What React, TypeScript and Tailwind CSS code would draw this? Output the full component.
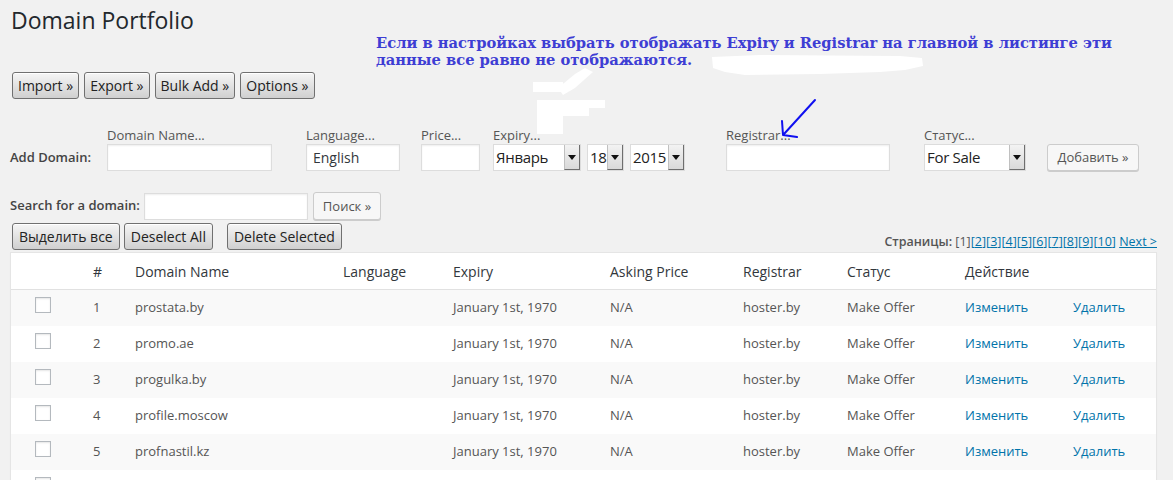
import React from "react";

const oldBase =
  "h-[27px] rounded-[3px] border border-[#707070] bg-linear-to-b from-[#f5f5f5] to-[#d0d0d0] text-[14px] leading-[25px] text-[#222] shadow-[inset_0_1px_0_#ffffff] whitespace-nowrap";
const oldBtn = `${oldBase} px-[6px]`;
const oldBtnNarrow = `${oldBase} px-[5px]`;
const wpBtn =
  "rounded-[3px] border border-[#cccccc] bg-[#f7f7f7] shadow-[0_1px_0_#cccccc] text-[13px] text-[#555] whitespace-nowrap";
const input =
  "h-[27px] bg-white border border-[#dddddd] shadow-[inset_0_1px_2px_rgba(0,0,0,0.07)]";

function Select({ w, text }: { w: string; text: string }) {
  return (
    <div className={`${w} h-[27px] bg-white border border-[#dcdcdc] flex items-stretch`}>
      <div className="flex-1 pl-[2px] text-[15px] leading-[25px] text-[#222] overflow-hidden tracking-[-0.3px]">
        {text}
      </div>
      <div className="w-[16px] bg-linear-to-b from-[#f3f3f3] to-[#d9d9d9] border-l border-[#c0c0c0] border-r border-b border-r-[#6e6e6e] border-b-[#6e6e6e] flex items-center justify-center">
        <div className="w-0 h-0 border-l-[4px] border-r-[4px] border-t-[5px] border-l-transparent border-r-transparent border-t-[#111]" />
      </div>
    </div>
  );
}

function Field({ label, className, children }: { label: string; className?: string; children: React.ReactNode }) {
  return (
    <div className={`flex flex-col ${className ?? ""}`}>
      <div className="text-[13px] leading-[18px] text-[#555] whitespace-nowrap">{label}</div>
      {children}
    </div>
  );
}

const rows = [
  ["1", "prostata.by"],
  ["2", "promo.ae"],
  ["3", "progulka.by"],
  ["4", "profile.moscow"],
  ["5", "profnastil.kz"],
];

const grid =
  "grid grid-cols-[82px_42px_208px_110px_157px_133px_104px_118px_108px_1fr]";

export default function App() {
  return (
    <div className="relative w-full h-[480px] overflow-hidden bg-[#f1f1f1] font-['Open_Sans',sans-serif] text-[#444]">
      <div className="pl-[10px] pr-[16px]">
        <h1 className="mt-[6px] text-[23px] leading-[29px] text-[#23282d] pl-[1px]">Domain Portfolio</h1>

        <div className="mt-[37px] ml-[2px] flex gap-[5px]">
          <button className={oldBtnNarrow}>Import »</button>
          <button className={oldBtnNarrow}>Export »</button>
          <button className={oldBtnNarrow}>Bulk Add »</button>
          <button className={oldBtnNarrow}>Options »</button>
        </div>

        <div className="mt-[27px] flex items-end">
          <div className="w-[97px] h-[27px] flex items-center text-[13px] font-semibold text-[#444]">Add Domain:</div>
          <Field label="Domain Name...">
            <div className={`${input} w-[165px]`} />
          </Field>
          <Field label="Language..." className="ml-[34px]">
            <div className={`${input} w-[94px] px-[6px] text-[14px] leading-[25px] text-[#32373c]`}>English</div>
          </Field>
          <Field label="Price..." className="ml-[21px]">
            <div className={`${input} w-[59px]`} />
          </Field>
          <Field label="Expiry..." className="ml-[13px]">
            <div className="flex gap-[6px]">
              <Select w="w-[88px]" text="Январь" />
              <Select w="w-[37px]" text="18" />
              <Select w="w-[55px]" text="2015" />
            </div>
          </Field>
          <Field label="Registrar..." className="ml-[41px]">
            <div className={`${input} w-[164px]`} />
          </Field>
          <Field label="Статус..." className="ml-[34px]">
            <Select w="w-[102px]" text="For Sale" />
          </Field>
          <button className={`${wpBtn} ml-[21px] w-[92px] h-[27px] leading-[25px]`}>Добавить »</button>
        </div>

        <div className="mt-[21px] flex items-center">
          <div className="w-[134px] text-[13px] font-semibold text-[#444] whitespace-nowrap">Search for a domain:</div>
          <div className={`${input} w-[164px]`} />
          <button className={`${wpBtn} ml-[5px] w-[68px] h-[28px] leading-[26px]`}>Поиск »</button>
        </div>

        <div className="mt-[3px] flex items-end">
          <div className="ml-[2px] flex">
            <button className={oldBtn}>Выделить все</button>
            <button className={`${oldBtn} ml-[4px]`}>Deselect All</button>
            <button className={`${oldBtn} ml-[14px]`}>Delete Selected</button>
          </div>
          <div className="ml-auto mb-[-1px] text-[12.5px] leading-[18px] text-[#555] whitespace-nowrap">
            <span className="font-semibold">Страницы:</span> [1]
            {["2", "3", "4", "5", "6", "7", "8", "9", "10"].map((n) => (
              <a key={n} className="text-[#0073aa] underline">[{n}]</a>
            ))}{" "}
            <a className="text-[#0073aa] underline">Next &gt;</a>
          </div>
        </div>

        <div className="mt-[2px] bg-white border border-[#e5e5e5] shadow-[0_1px_1px_rgba(0,0,0,0.04)]">
          <div className={`${grid} h-[37px] border-b border-[#e1e1e1] items-center text-[14px] text-[#32373c]`}>
            <div />
            <div>#</div>
            <div>Domain Name</div>
            <div>Language</div>
            <div>Expiry</div>
            <div>Asking Price</div>
            <div>Registrar</div>
            <div>Статус</div>
            <div>Действие</div>
            <div />
          </div>
          {[...rows, ["6", ""]].map(([n, d], i) => (
            <div
              key={n}
              className={`${grid} h-[36px] items-start text-[13px] text-[#555] ${i % 2 === 0 ? "bg-[#f9f9f9]" : "bg-white"}`}
            >
              <div className="pl-[24px] pt-[7px]">
                <div className="w-[16px] h-[16px] bg-white border border-[#b4b9be] shadow-[inset_0_1px_2px_rgba(0,0,0,0.1)]" />
              </div>
              {d && (
                <>
                  <div className="leading-[35px]">{n}</div>
                  <div className="leading-[35px]">{d}</div>
                  <div className="leading-[35px]" />
                  <div className="leading-[35px]">January 1st, 1970</div>
                  <div className="leading-[35px]">N/A</div>
                  <div className="leading-[35px]">hoster.by</div>
                  <div className="leading-[35px]">Make Offer</div>
                  <div className="leading-[35px] text-[#0073aa]">Изменить</div>
                  <div className="leading-[35px] text-[#0073aa]">Удалить</div>
                </>
              )}
            </div>
          ))}
        </div>
      </div>

      {/* annotation overlay */}
      <div className="absolute left-[376px] top-[34px] w-[790px] text-[14.7px] leading-[17px] font-bold font-['DejaVu_Serif',serif] text-[#3e3ed4] whitespace-nowrap">
        Если в настройках выбрать отображать Expiry и Registrar на главной в листинге эти
        <br />
        данные все равно не отображаются.
      </div>

      <svg className="absolute left-0 top-0 pointer-events-none" width="1173" height="480">
        <path
          d="M712 57 L760 55 L900 56 L922 58 L923 66 L905 70 L880 72 L820 74 L745 75 L725 72 L713 68 Z"
          fill="#ffffff"
        />
        <path d="M585 68 L593 72 L575 88 L563 95 L558 88 L575 74 Z" fill="#ffffff" />
        <rect x="533" y="82" width="30" height="10" fill="#ffffff" />
        <rect x="537" y="100" width="68" height="8" fill="#ffffff" />
        <rect x="537" y="107" width="52" height="9" fill="#ffffff" />
        <rect x="537" y="115" width="26" height="19" fill="#ffffff" />
        <path
          d="M815 100 L784 134 M782 121 L783 135 L797 137"
          stroke="#1010f0"
          strokeWidth="2"
          fill="none"
          strokeLinecap="round"
          strokeLinejoin="round"
        />
      </svg>
    </div>
  );
}
